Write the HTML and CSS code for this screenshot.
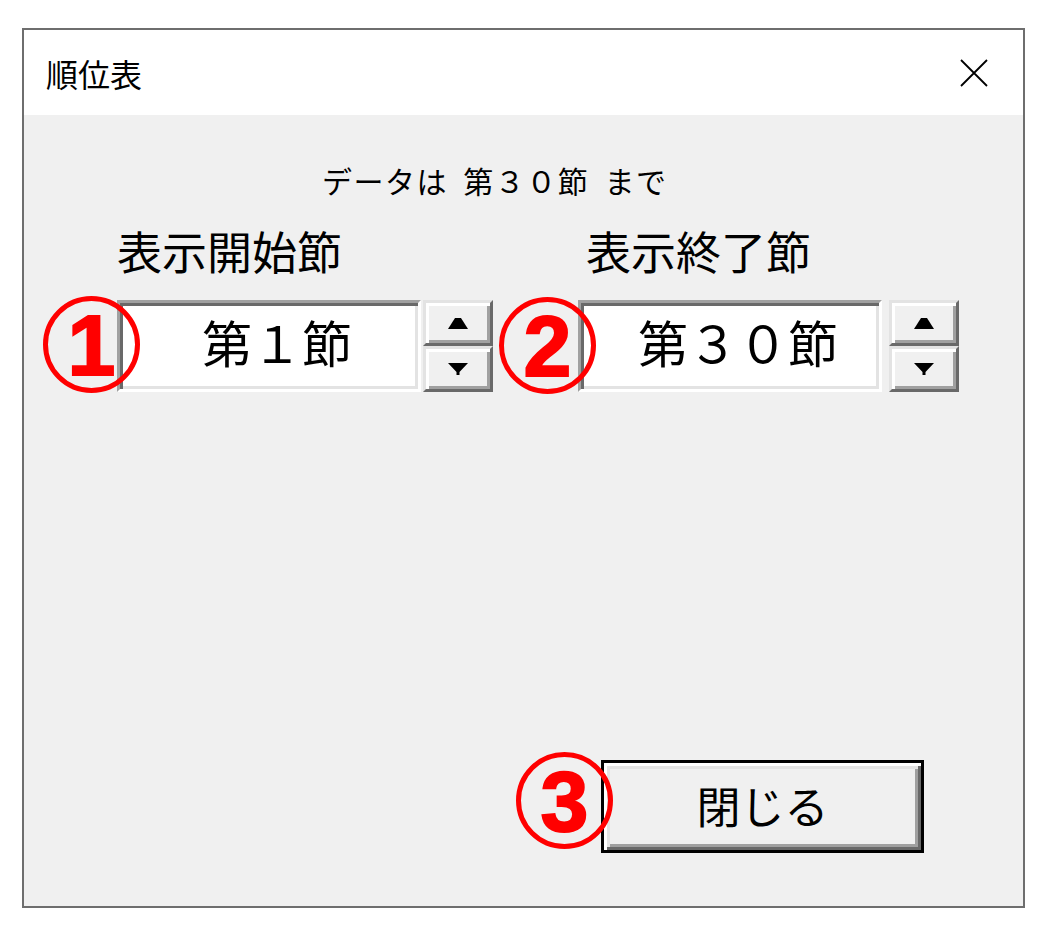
FILE: index.html
```html
<!DOCTYPE html>
<html lang="ja">
<head>
  <meta charset="UTF-8">
  <title>順位表</title>
  <link rel="stylesheet" href="styles.css">
</head>
<body>
  <div class="window">
    <div class="titlebar">
      <span class="title">順位表</span>
      <svg class="close-x" width="28" height="28" viewBox="0 0 28 28">
        <path d="M1 1 L27 27 M27 1 L1 27" stroke="#000" stroke-width="1.8" fill="none"/>
      </svg>
    </div>
    <div class="content">
      <div class="info">データは 第３０節 まで</div>
      <div class="groups">
        <div class="group">
          <div class="label">表示開始節</div>
          <div class="spinbox">
            <div class="field">第１節</div>
            <div class="spin">
              <div class="spin-btn">
                <svg width="20" height="11" viewBox="0 0 20 11"><polygon points="7,0 13,0 20,11 0,11" fill="#000"/></svg>
              </div>
              <div class="spin-btn">
                <svg width="20" height="12" viewBox="0 0 20 12"><polygon points="0,0 20,0 11.5,9 11.5,12 8.5,12 8.5,9" fill="#000"/></svg>
              </div>
            </div>
            <div class="mark mark-1">1</div>
          </div>
        </div>
        <div class="group group-end">
          <div class="label">表示終了節</div>
          <div class="spinbox spinbox-wide">
            <div class="field">第３０節</div>
            <div class="spin">
              <div class="spin-btn">
                <svg width="20" height="11" viewBox="0 0 20 11"><polygon points="7,0 13,0 20,11 0,11" fill="#000"/></svg>
              </div>
              <div class="spin-btn">
                <svg width="20" height="12" viewBox="0 0 20 12"><polygon points="0,0 20,0 11.5,9 11.5,12 8.5,12 8.5,9" fill="#000"/></svg>
              </div>
            </div>
            <div class="mark mark-2">2</div>
          </div>
        </div>
      </div>
      <div class="footer">
        <div class="close-wrap">
          <button class="close-btn" type="button">閉じる</button>
          <div class="mark mark-3">3</div>
        </div>
      </div>
    </div>
  </div>
</body>
</html>
```

FILE: styles.css
```css
body { margin: 0; background: #fff; font-family: "Noto Sans CJK JP", sans-serif; color: #000; }
.window { box-sizing: border-box; width: 1003px; height: 880px; margin: 28px 0 0 22px; border: 2px solid #6e6e6e; display: flex; flex-direction: column; }
.titlebar { height: 85px; flex: none; background: #fff; display: flex; align-items: center; justify-content: space-between; padding: 0 35px 0 22px; }
.title { font-size: 32px; line-height: 1; }
.close-x { display: block; }
.content { flex: 1; background: #f0f0f0; display: flex; flex-direction: column; }
.info { margin: 50px 0 0 298px; font-size: 30px; line-height: 1; letter-spacing: 1.5px; word-spacing: 7px; }
.groups { display: flex; gap: 85px; margin: 33px 0 0 93px; }
.group { display: flex; flex-direction: column; gap: 27px; }
.label { font-size: 45px; line-height: 1; }
.group-end .label { padding-left: 8px; }
.spinbox { position: relative; display: flex; gap: 2px; }
.spinbox-wide { gap: 7px; }
.field { box-sizing: border-box; width: 304px; height: 92px; background: #fff; border: 3px solid; border-color: #a0a0a0 #fff #fff #a0a0a0; box-shadow: inset 3px 3px 0 #696969, inset -3px -3px 0 #e3e3e3; display: flex; align-items: center; justify-content: center; padding: 0 0 10px 16px; font-size: 50px; line-height: 1; }
.spin { width: 70px; height: 92px; display: flex; flex-direction: column; }
.spin-btn { flex: 1; box-sizing: border-box; background: #f0f0f0; border: 3px solid; border-color: #e3e3e3 #696969 #696969 #e3e3e3; box-shadow: inset 3px 3px 0 #fff, inset -3px -3px 0 #a0a0a0; display: flex; align-items: center; justify-content: center; }
.spin-btn svg { display: block; }
.footer { margin-top: auto; margin-bottom: 53px; display: flex; justify-content: flex-end; padding-right: 99px; }
.close-wrap { position: relative; }
.close-btn { box-sizing: border-box; width: 323px; height: 93px; background: #f0f0f0; border: 3px solid #000; box-shadow: inset 3px 3px 0 #fff, inset -3px -3px 0 #696969, inset 6px 6px 0 #e3e3e3, inset -6px -6px 0 #a0a0a0; font-family: "Noto Sans CJK JP", sans-serif; font-size: 44px; line-height: 1; color: #000; padding: 0 0 4px; cursor: pointer; }
.mark { position: absolute; box-sizing: border-box; width: 97px; height: 97px; border: 5px solid #f00; border-radius: 50%; color: #f00; font-family: "Liberation Sans", Arial, sans-serif; font-weight: bold; font-size: 86px; line-height: 1; -webkit-text-stroke: 2px #f00; display: flex; align-items: center; justify-content: center; }
.mark-1 { left: -74px; top: -4px; }
.mark-2 { left: -79px; top: -3px; }
.mark-3 { left: -85px; top: -8px; }
```
